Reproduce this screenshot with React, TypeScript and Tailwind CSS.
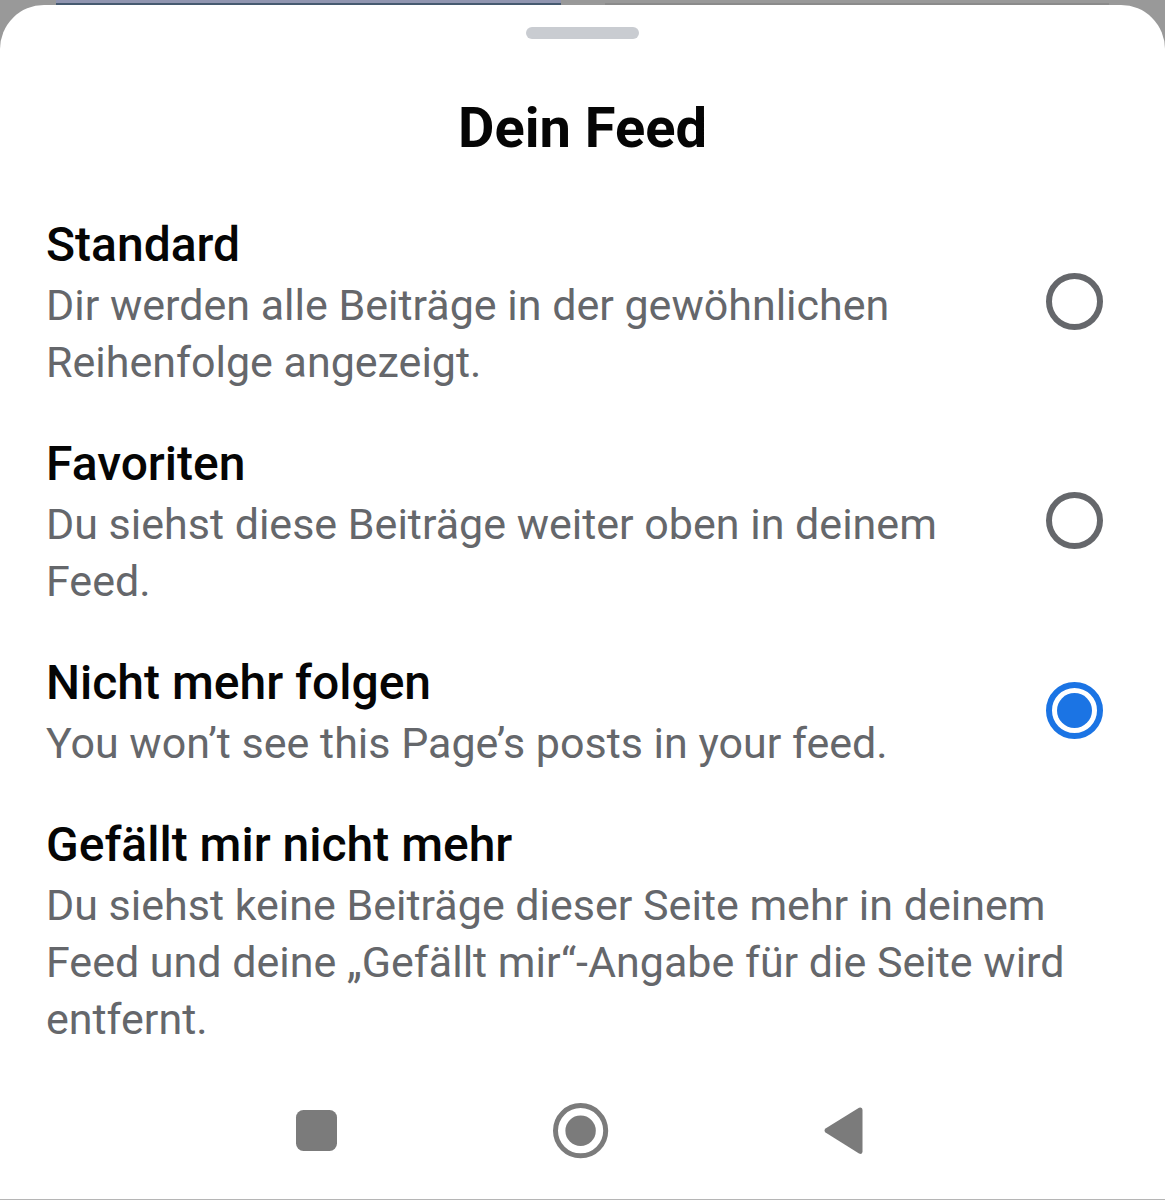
import { useState } from "react";

interface FeedOption {
  id: string;
  title: string;
  text: string;
}

const options: FeedOption[] = [
  {
    id: "default",
    title: "Standard",
    text: "Dir werden alle Beiträge in der gewöhnlichen Reihenfolge angezeigt.",
  },
  {
    id: "favorites",
    title: "Favoriten",
    text: "Du siehst diese Beiträge weiter oben in deinem Feed.",
  },
  {
    id: "unfollow",
    title: "Nicht mehr folgen",
    text: "You won’t see this Page’s posts in your feed.",
  },
];

const titleClass =
  "mb-0.5 block pt-1 text-[48px] leading-[60px] font-medium text-[#050505]";
const textClass = "block text-[43px] leading-[57px] text-[#65676b]";

const App = () => {
  const [selected, setSelected] = useState<string>("unfollow");

  return (
    <div className="flex min-h-screen flex-col bg-[#999] font-['Roboto',sans-serif]">
      {/* what still shows of the page behind the sheet */}
      <div className="flex h-[5px] shrink-0 gap-11 px-14">
        <div className="flex-1 border-b-2 border-[#465a70] bg-[#9095b0]" />
        <div className="flex-1 border-b-2 border-[#8b8b8b]" />
      </div>
      <main className="flex flex-1 flex-col rounded-t-[44px] border-b border-[#b5b5b5] bg-white">
        <div className="mx-auto mt-[22px] h-3 w-[113px] rounded-full bg-[#c9ccd1]" />
        <h1 className="mt-14 text-center text-[56px] leading-[66px] font-bold text-[#050505]">
          Dein Feed
        </h1>
        <div className="mt-[50px] flex flex-col gap-[39px] px-[46px]">
          {options.map((option) => (
            <label
              key={option.id}
              className="flex items-center justify-between gap-8 pr-4"
            >
              <span className="max-w-[900px]">
                <span className={titleClass}>{option.title}</span>
                <span className={textClass}>{option.text}</span>
              </span>
              <input
                type="radio"
                name="feed"
                value={option.id}
                checked={selected === option.id}
                onChange={() => setSelected(option.id)}
                className="size-[57px] shrink-0 appearance-none rounded-full border-[6px] border-[#65676b] bg-white bg-clip-content p-[5px] checked:border-[#1b74e4] checked:bg-[#1b74e4]"
              />
            </label>
          ))}
          <button type="button" className="text-left">
            <span className={titleClass}>Gefällt mir nicht mehr</span>
            <span className={textClass}>
              Du siehst keine Beiträge dieser Seite mehr in deinem Feed und
              deine „Gefällt mir“-Angabe für die Seite wird entfernt.
            </span>
          </button>
        </div>
        <nav className="mt-auto flex items-center justify-center gap-[208px] pr-1 pb-10">
          <button type="button" aria-label="Übersicht">
            <svg viewBox="0 0 56 56" className="size-14" fill="#7b7b7b">
              <rect x="7" y="7" width="41" height="41" rx="7.500" />
            </svg>
          </button>
          <button type="button" aria-label="Startseite">
            <svg viewBox="0 0 56 56" className="size-14" fill="#7b7b7b">
              <circle cx="27.600" cy="27.700" r="25.100" fill="none" stroke="#7b7b7b" strokeWidth="5" />
              <circle cx="27.600" cy="27.700" r="15.200" />
            </svg>
          </button>
          <button type="button" aria-label="Zurück">
            <svg viewBox="0 0 56 56" className="size-14" fill="#7b7b7b">
              <path d="M8.500 25.600 42 4.700Q45.500 3.500 45.500 7V48.500Q45.500 52 42 50.500L8.500 29.600Q6.500 27.600 8.500 25.600Z" />
            </svg>
          </button>
        </nav>
      </main>
    </div>
  );
};

export default App;
